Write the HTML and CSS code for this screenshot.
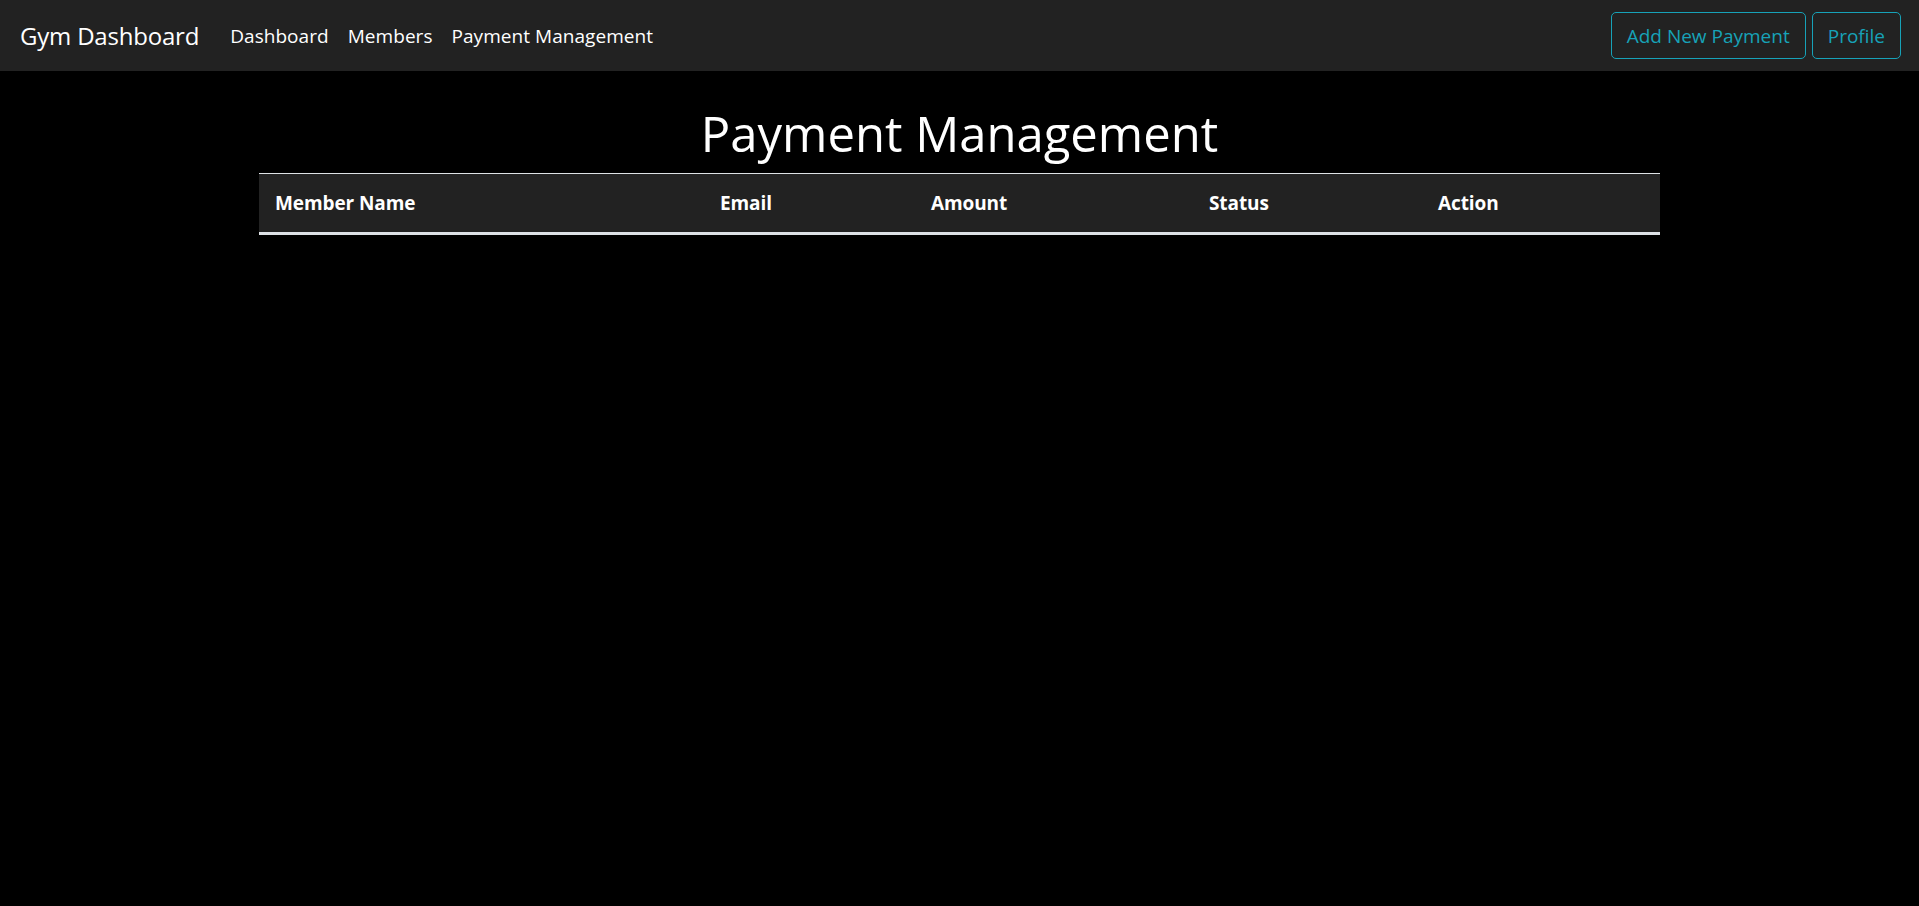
FILE: index.html
```html
<!DOCTYPE html>
<html lang="en">
<head>
<meta charset="utf-8">
<title>Gym Dashboard</title>
<link rel="stylesheet" href="styles.css">
</head>
<body>
<nav class="navbar">
  <a class="brand" href="#">Gym Dashboard</a>
  <ul class="nav-links">
    <li><a class="nav-link" href="#">Dashboard</a></li>
    <li><a class="nav-link" href="#">Members</a></li>
    <li><a class="nav-link" href="#">Payment Management</a></li>
  </ul>
  <div class="nav-actions">
    <button class="btn-outline" type="button">Add New Payment</button>
    <button class="btn-outline" type="button">Profile</button>
  </div>
</nav>
<main class="content">
  <h1 class="page-title">Payment Management</h1>
  <table class="payments">
    <thead>
      <tr>
        <th class="col-name">Member Name</th>
        <th class="col-email">Email</th>
        <th class="col-amount">Amount</th>
        <th class="col-status">Status</th>
        <th class="col-action">Action</th>
      </tr>
    </thead>
    <tbody></tbody>
  </table>
</main>
</body>
</html>
```

FILE: styles.css
```css
* { box-sizing: border-box; }

html, body {
  margin: 0;
  padding: 0;
  background: #000;
  color: #fff;
  font-family: "Open Sans", "Noto Sans", "Liberation Sans", sans-serif;
}

.navbar {
  height: 71px;
  background: #222222;
  display: flex;
  align-items: center;
  padding: 0 18px 0 20px;
}

.brand {
  color: #fff;
  text-decoration: none;
  font-size: 24px;
  margin-right: 22px;
  letter-spacing: -0.2px;
}

.nav-links {
  display: flex;
  list-style: none;
  margin: 0;
  padding: 0;
}

.nav-link {
  display: block;
  color: #fff;
  text-decoration: none;
  font-size: 19px;
  padding: 0 10px 0 9px;
  letter-spacing: 0.05px;
}

.nav-actions {
  margin-left: auto;
  display: flex;
  gap: 6px;
}

.btn-outline {
  height: 47px;
  padding: 0 15px;
  background: transparent;
  border: 1px solid #17a2b8;
  border-radius: 5px;
  color: #17a2b8;
  font-family: inherit;
  font-size: 19px;
  letter-spacing: 0;
}

.content {
  display: flex;
  flex-direction: column;
  align-items: center;
  padding-top: 22px;
}

.page-title {
  margin: 0;
  font-size: 49px;
  font-weight: 400;
  line-height: 80px;
  letter-spacing: 0;
}

.payments {
  width: 1401px;
  border-collapse: collapse;
}

.payments th {
  background: #222222;
  color: #fff;
  text-align: left;
  font-size: 19px;
  font-weight: 700;
  padding: 15px 15px 15px 16px;
  line-height: 28px;
  letter-spacing: -0.1px;
  border-top: 1px solid #dee2e6;
  border-bottom: 3px solid #dee2e6;
}

.col-name { width: 445px; }
.col-email { width: 211px; }
.col-amount { width: 278px; }
.col-status { width: 229px; }
.col-action { width: 238px; }
```
